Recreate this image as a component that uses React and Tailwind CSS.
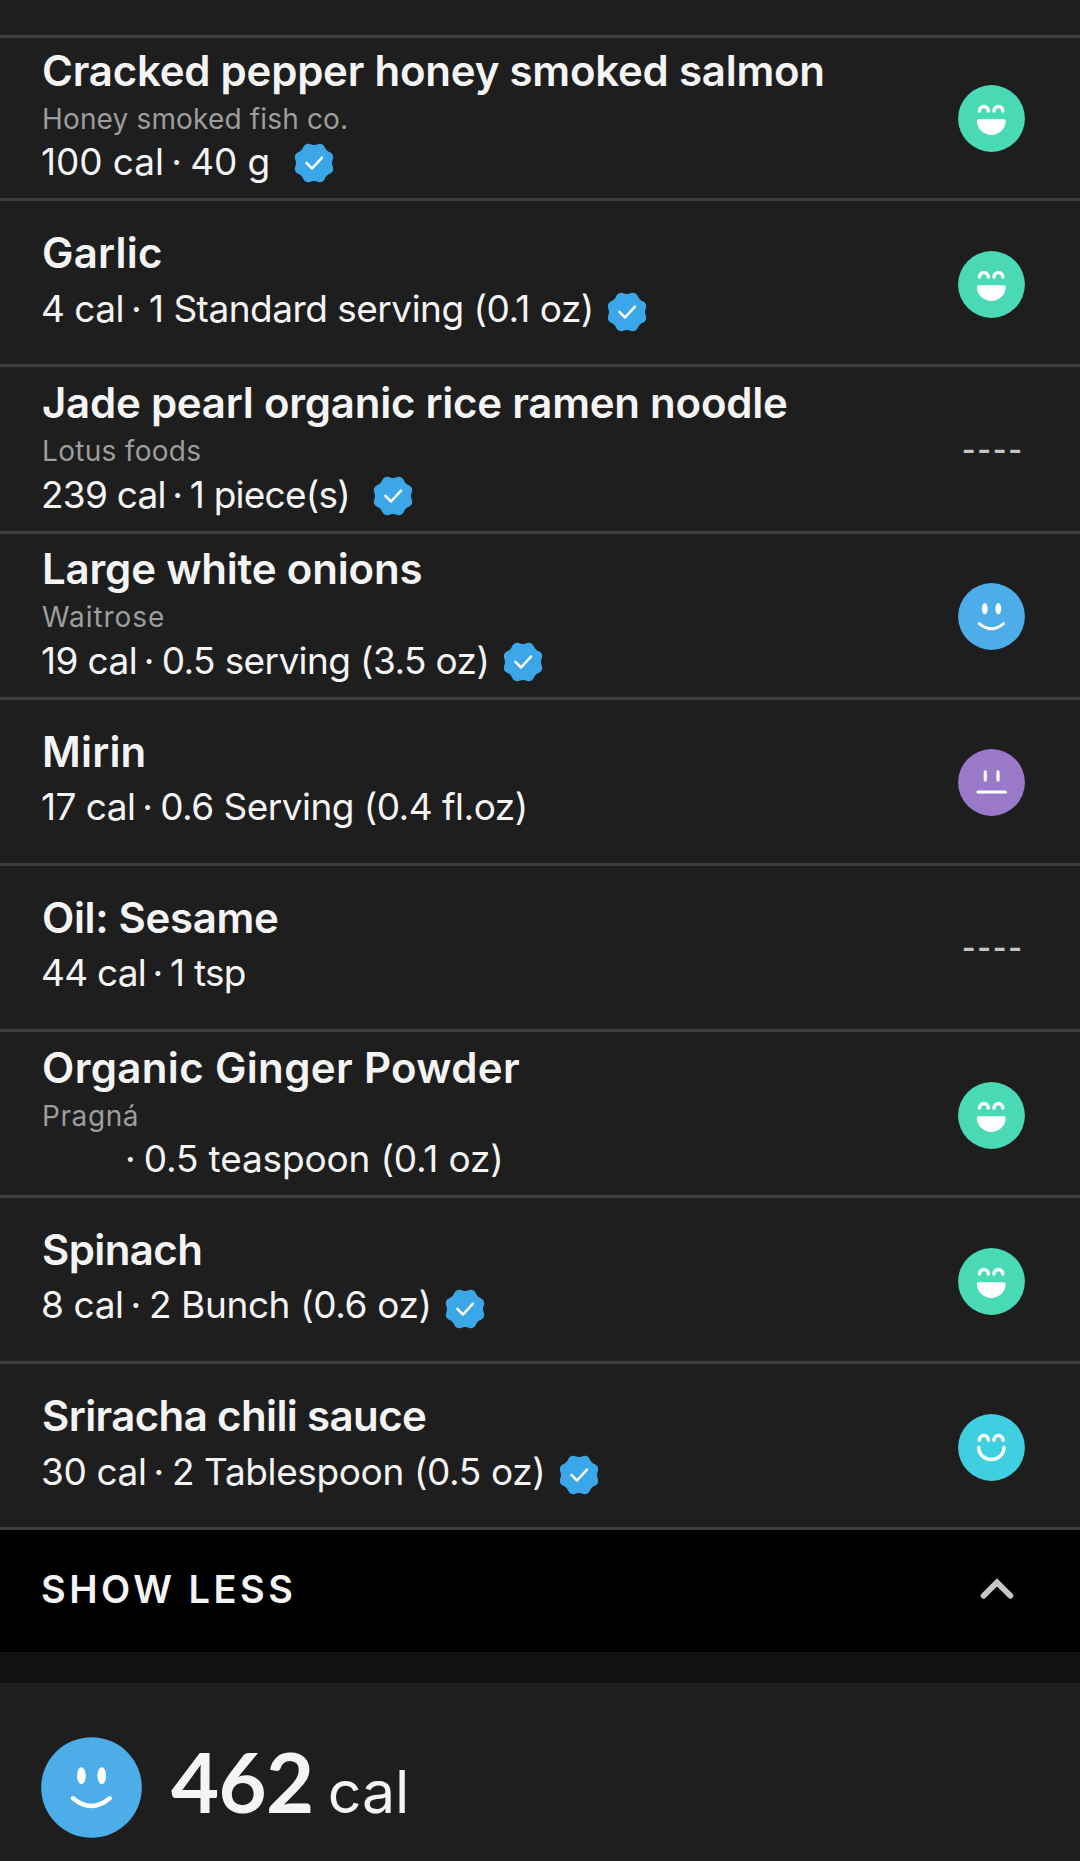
import React from "react";
import clsx from "clsx";

const foods = [
  {
    title: "Cracked pepper honey smoked salmon",
    titleClass: "tracking-[-0.23px]",
    brand: "Honey smoked fish co.",
    brandClass: "tracking-[0.16px]",
    calories: "100 cal ",
    amount: " 40 g ",
    detailClass: "tracking-[-0.07px]",
    verified: true,
    mood: "great",
  },
  {
    title: "Garlic",
    titleClass: "tracking-[0.22px]",
    calories: "4 cal ",
    amount: " 1 Standard serving (0.1 oz)",
    detailClass: "tracking-[-0.51px]",
    verified: true,
    mood: "great",
  },
  {
    title: "Jade pearl organic rice ramen noodle",
    titleClass: "tracking-[-0.24px]",
    brand: "Lotus foods",
    brandClass: "tracking-[0.3px]",
    calories: "239 cal ",
    amount: " 1 piece(s) ",
    detailClass: "tracking-[-0.77px]",
    verified: true,
    mood: null,
  },
  {
    title: "Large white onions",
    titleClass: "tracking-[-0.19px]",
    brand: "Waitrose",
    brandClass: "tracking-[0.93px]",
    calories: "19 cal ",
    amount: " 0.5 serving (3.5 oz)",
    detailClass: "tracking-[-0.61px]",
    verified: true,
    mood: "good",
  },
  {
    title: "Mirin",
    titleClass: "tracking-[0.2px]",
    calories: "17 cal ",
    amount: " 0.6 Serving (0.4 fl.oz)",
    detailClass: "tracking-[-0.54px]",
    mood: "neutral",
  },
  {
    title: "Oil: Sesame",
    titleClass: "tracking-[-0.34px]",
    calories: "44 cal ",
    amount: " 1 tsp",
    detailClass: "tracking-[-0.77px]",
    mood: null,
  },
  {
    title: "Organic Ginger Powder",
    titleClass: "tracking-[0.35px]",
    brand: "Pragná",
    brandClass: "tracking-[0.6px]",
    calories: "",
    amount: " 0.5 teaspoon (0.1 oz)",
    detailClass: "tracking-[-0.16px] pl-[87px]",
    mood: "great",
  },
  {
    title: "Spinach",
    titleClass: "tracking-[-0.6px]",
    calories: "8 cal ",
    amount: " 2 Bunch (0.6 oz)",
    detailClass: "tracking-[-0.39px]",
    verified: true,
    mood: "great",
  },
  {
    title: "Sriracha chili sauce",
    titleClass: "tracking-[-0.62px]",
    calories: "30 cal ",
    amount: " 2 Tablespoon (0.5 oz)",
    detailClass: "tracking-[-0.38px]",
    verified: true,
    mood: "happy",
  },
];

const moodColors = {
  great: "#4ad9b5",
  good: "#4cade9",
  neutral: "#9b79c9",
  happy: "#3fcfe0",
};

// eight-lobed seal outline
const sealPoints = Array.from({ length: 96 }, (_, i) => {
  const a = (i / 96) * Math.PI * 2;
  const r = 19.2 - 1.2 * Math.cos(8 * a);
  return `${(20 + r * Math.cos(a)).toFixed(2)},${(20 + r * Math.sin(a)).toFixed(2)}`;
}).join(" ");

const VerifiedBadge = ({ className }) => (
  <svg viewBox="0 0 40 40" className={clsx("size-10 shrink-0", className)}>
    <polygon points={sealPoints} fill="#3ba7e8" />
    <path
      d="M12.4 19.8l5.6 5.7L28 14.6"
      fill="none"
      stroke="#fff"
      strokeWidth="2.5"
      strokeLinecap="round"
      strokeLinejoin="round"
    />
  </svg>
);

const MoodFace = ({ mood, className }) => (
  <svg viewBox="0 0 67 67" className={clsx("shrink-0", className)}>
    <circle cx="33.5" cy="33.5" r="33.4" fill={moodColors[mood]} />
    <g fill="none" stroke="#fff" strokeWidth="3.5" strokeLinecap="round">
      {mood === "great" && (
        <>
          <path d="M21.5 26a4.4 4.4 0 0 1 8.8 0M36 26a4.4 4.4 0 0 1 8.8 0" />
          <path
            d="M20.3 34.2h26q1.5 0 1.4 1.5a14.4 14.2 0 0 1-28.8 0q-.1-1.5 1.4-1.5z"
            fill="#fff"
            stroke="none"
          />
        </>
      )}
      {mood === "good" && (
        <>
          <ellipse cx="26.8" cy="25.7" rx="2.9" ry="5.6" fill="#fff" stroke="none" />
          <ellipse cx="40.3" cy="25.7" rx="2.9" ry="5.6" fill="#fff" stroke="none" />
          <path d="M21.2 40.6q12.2 10.2 24.4 0" strokeWidth="2.9" />
        </>
      )}
      {mood === "neutral" && (
        <path d="M27.3 22.9v8M40 22.9v8M20 43h27.4" strokeWidth="3.2" />
      )}
      {mood === "happy" && (
        <>
          <path d="M21.4 26.2a4.5 4.7 0 0 1 9 0M36 26.2a4.5 4.7 0 0 1 9 0" />
          <path d="M20.7 33.4a12.6 12.2 0 0 0 25.2 0" />
        </>
      )}
    </g>
  </svg>
);

const FoodRow = ({ food, first }) => (
  <div
    className={clsx(
      "flex items-center justify-between border-b-[3px] border-[#3e3e3e] pl-[42px] pr-[55px]",
      first ? "h-[163.3px]" : "h-[166.15px] pt-[3px]"
    )}
  >
    <div className={food.brand ? "pb-2" : "pb-[2px]"}>
      <h2
        className={clsx(
          "h-[50px] whitespace-nowrap text-[42px] font-semibold leading-[50px]",
          food.titleClass
        )}
      >
        {food.title}
      </h2>
      {food.brand && (
        <p
          className={clsx(
            "h-[46px] text-[28px] leading-[46px] text-[#9d9d9d]",
            food.brandClass
          )}
        >
          {food.brand}
        </p>
      )}
      <div className={clsx("-ml-px flex items-center", food.brand ? "h-[41px]" : "h-[60px]")}>
        <p className={clsx("whitespace-pre text-[37px]", food.detailClass)}>
          {food.calories}
          <span className="-ml-[3px] -mr-[2px]">·</span>
          {food.amount}
        </p>
        {food.verified && (
          <VerifiedBadge className={clsx("ml-[13.5px]", food.brand ? "mt-[2px]" : "mt-[7px]")} />
        )}
      </div>
    </div>
    {food.mood ? (
      <MoodFace mood={food.mood} className="size-[67px]" />
    ) : (
      <span className="mb-[5px] mr-[1px] font-['Liberation_Sans',sans-serif] text-[40px] leading-none tracking-[2.2px] text-[#c4c4c4]">
        ----
      </span>
    )}
  </div>
);

export default function App() {
  return (
    <div className="flex h-[1861px] w-[1080px] flex-col overflow-hidden bg-[#1e1e1e] font-['Inter',sans-serif] text-[#f4f4f4]">
      <div className="h-[38px] shrink-0 border-b-[3px] border-[#3e3e3e]" />

      {/* Ingredients */}
      <div className="shrink-0">
        {foods.map((food, i) => (
          <FoodRow key={food.title} food={food} first={i === 0} />
        ))}
      </div>

      <button className="flex h-[121.5px] shrink-0 items-center justify-between bg-black pb-[5px] pl-[41px] pr-[66px]">
        <span className="text-[38px] font-semibold leading-none tracking-[3.5px]">SHOW LESS</span>
        <svg viewBox="0 0 34 22" className="h-[22px] w-[34px]">
          <path
            d="M3.6 17.8L17 4.4l13.4 13.4"
            fill="none"
            stroke="#c6c6c6"
            strokeWidth="5.8"
            strokeLinecap="round"
          />
        </svg>
      </button>
      <div className="h-[31px] shrink-0 bg-[#121212]" />

      {/* Total */}
      <div className="flex items-start pl-[41px] pt-[54.5px]">
        <MoodFace mood="good" className="size-[101px]" />
        <div className="-mt-[6px] ml-[29px] flex items-baseline">
          <span className="font-['Lato',sans-serif] text-[83px] font-bold leading-[100px] tracking-[-0.6px]">
            462
          </span>
          <span className="ml-[14px] text-[59px] leading-none">cal</span>
        </div>
      </div>
    </div>
  );
}
